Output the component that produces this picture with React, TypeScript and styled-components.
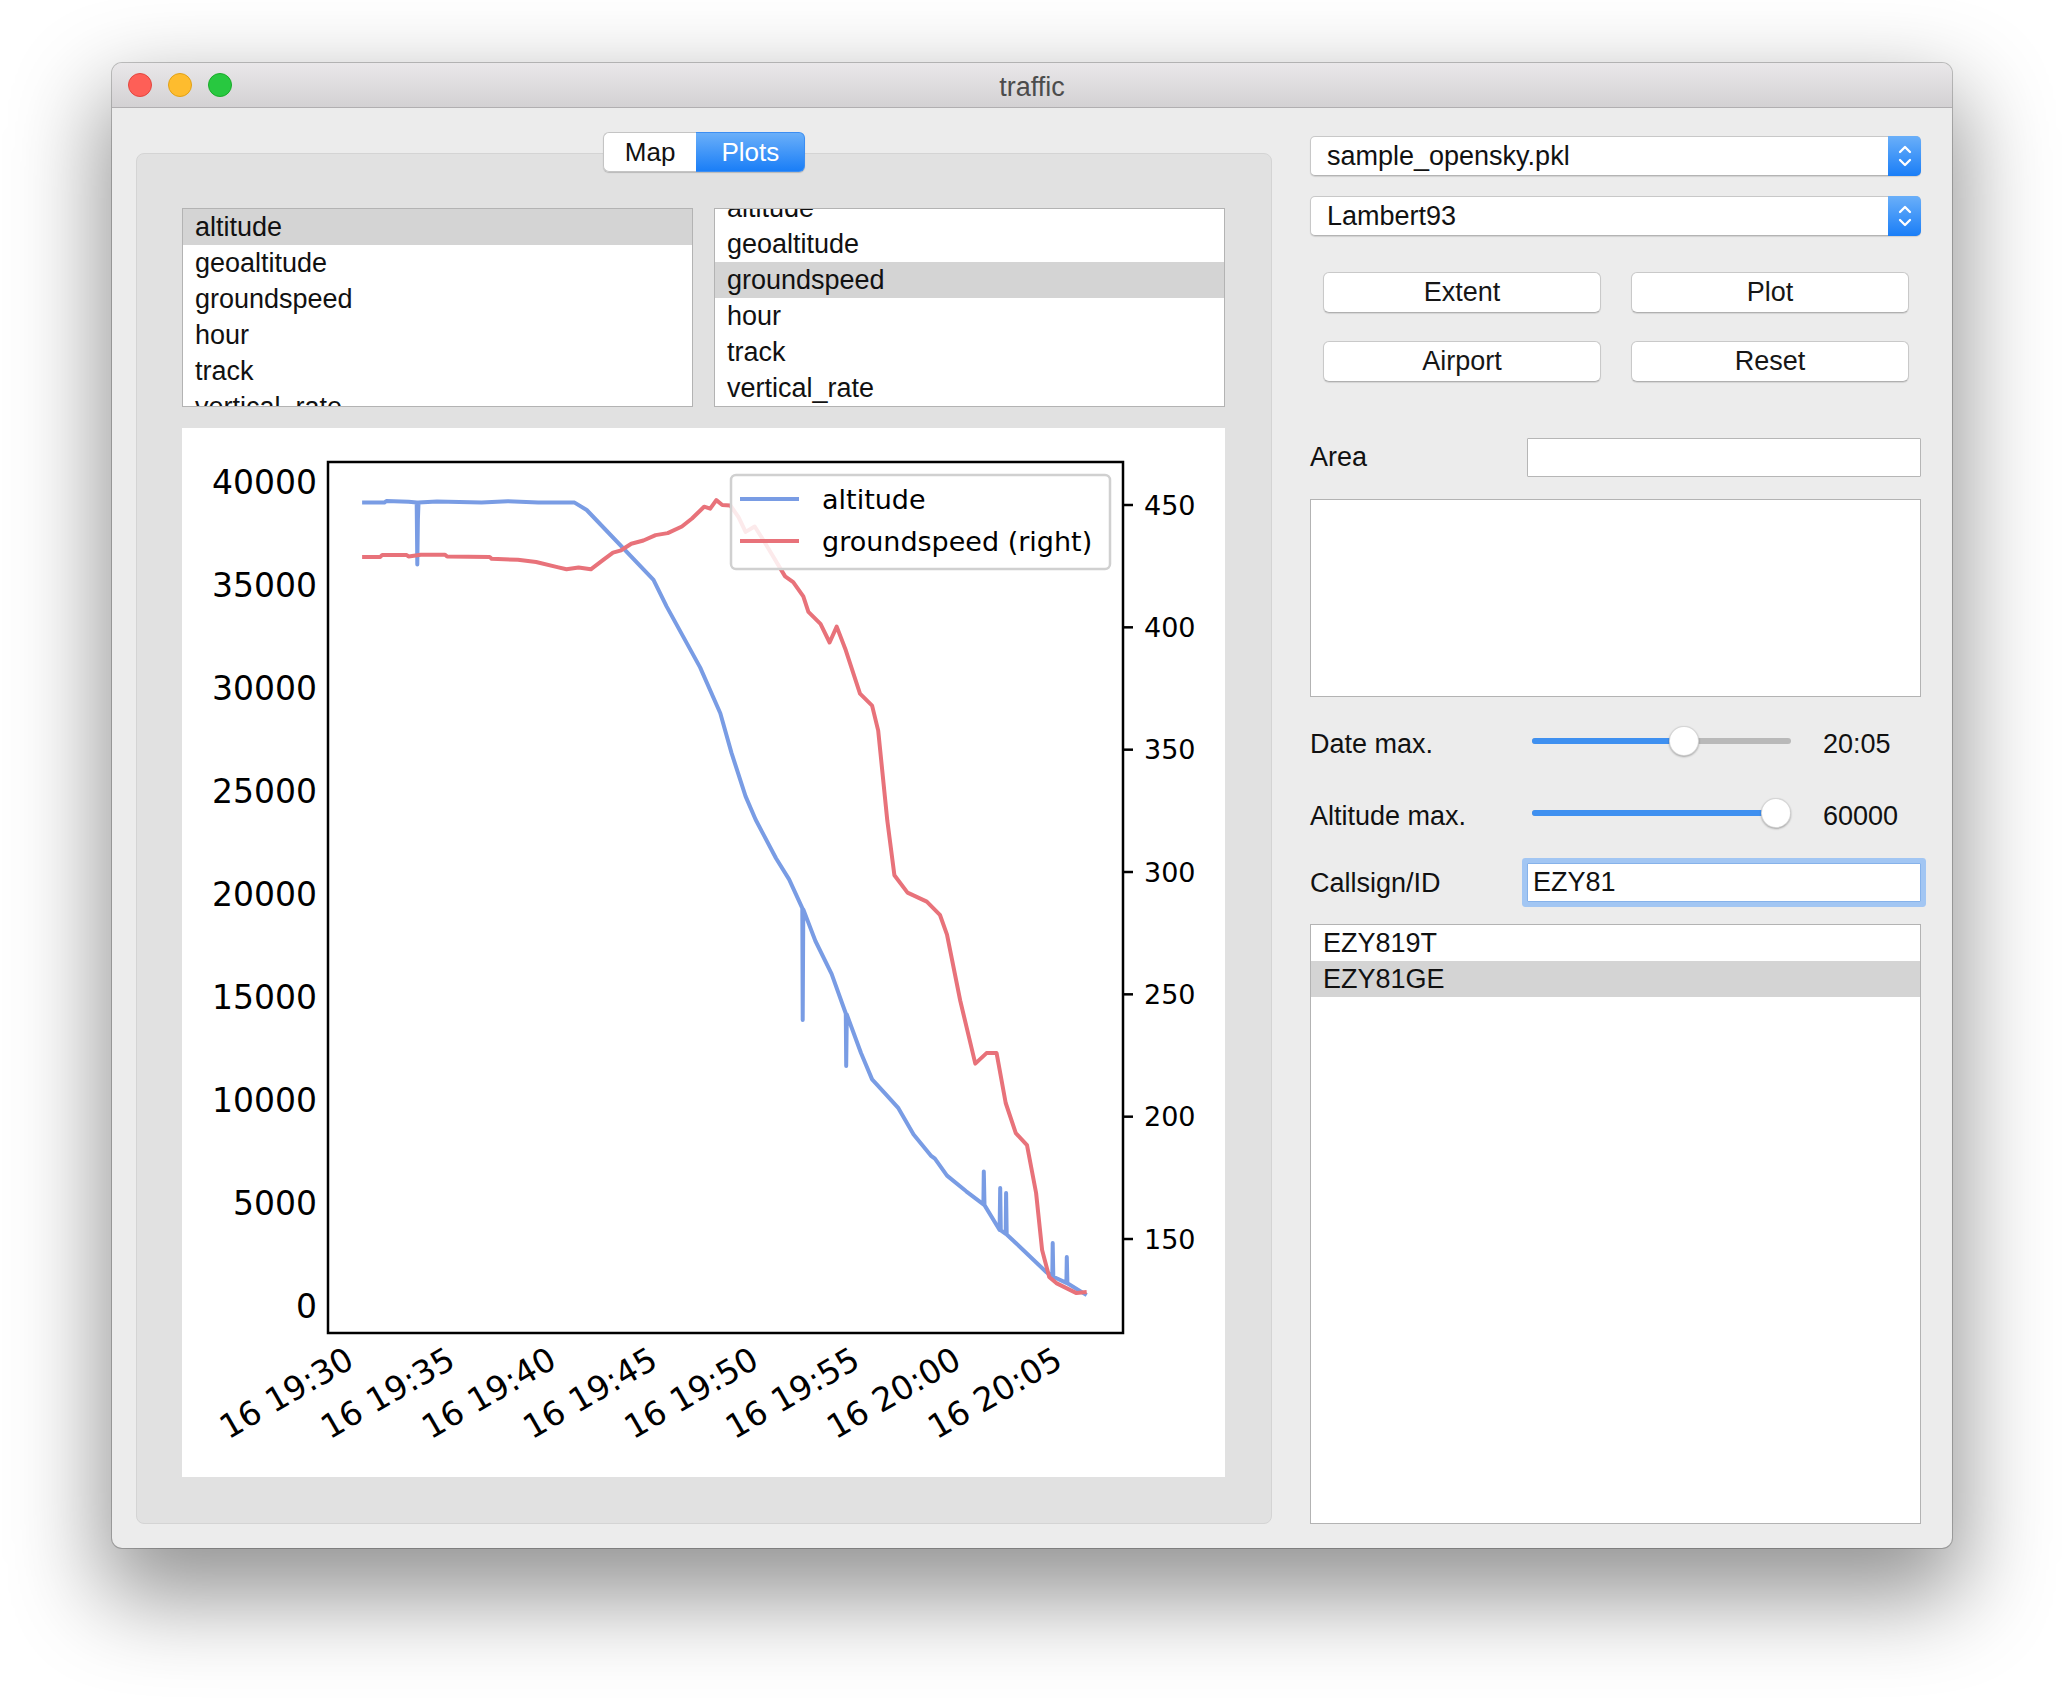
import React from 'react';
import styled, { createGlobalStyle } from 'styled-components';

const GlobalStyle = createGlobalStyle`
  html, body {
    margin: 0;
    padding: 0;
    background: #ffffff;
  }
  body {
    font-family: 'Liberation Sans', Arial, sans-serif;
    color: #1a1a1a;
  }
  * {
    box-sizing: border-box;
  }
`;

const Desktop = styled.div`
  width: 2064px;
  height: 1708px;
  display: flex;
  justify-content: center;
  padding-top: 63px;
`;

const Window = styled.div`
  width: 1840px;
  height: 1485px;
  display: flex;
  flex-direction: column;
  background: #ececec;
  border-radius: 10px;
  overflow: hidden;
  box-shadow: 0 0 0 1px rgba(0, 0, 0, 0.22), 0 40px 90px 10px rgba(0, 0, 0, 0.42);
`;

const TitleBar = styled.div`
  height: 45px;
  flex: none;
  display: grid;
  grid-template-columns: 1fr auto 1fr;
  align-items: center;
  background: linear-gradient(#e9e7e9, #d3d1d3);
  border-bottom: 1px solid #b1afb1;
`;

const Lights = styled.div`
  display: flex;
  gap: 16px;
  padding-left: 16px;
`;

const Light = styled.span<{ $fill: string; $edge: string }>`
  width: 24px;
  height: 24px;
  border-radius: 50%;
  background: ${(p) => p.$fill};
  border: 1px solid ${(p) => p.$edge};
`;

const Title = styled.div`
  padding-top: 4px;
  font-size: 27px;
  color: #4c4c4c;
`;

const Body = styled.div`
  flex: 1;
  display: flex;
  gap: 38px;
  padding: 24px 31px 24px 24px;
  min-height: 0;
`;

const TabWidget = styled.div`
  width: 1136px;
  display: flex;
  flex-direction: column;
`;

const TabBar = styled.div`
  align-self: center;
  display: flex;
  height: 40px;
  position: relative;
  z-index: 1;
  margin-bottom: -19px;
  border-radius: 6px;
  box-shadow: 0 1px 1px rgba(0, 0, 0, 0.18);
`;

const Tab = styled.div<{ $active?: boolean }>`
  display: flex;
  align-items: center;
  padding: 0 ${(p) => (p.$active ? '25px' : '21px')};
  font-size: 26px;
  color: ${(p) => (p.$active ? '#ffffff' : '#111111')};
  background: ${(p) => (p.$active ? 'linear-gradient(#6aaff9, #1a7ef7)' : '#ffffff')};
  border: 1px solid ${(p) => (p.$active ? '#3c8ef2' : '#c4c4c4')};
  border-radius: ${(p) => (p.$active ? '0 6px 6px 0' : '6px 0 0 6px')};
  ${(p) => (p.$active ? 'border-left: none;' : 'border-right: none;')}
`;

const TabPanel = styled.div`
  flex: 1;
  display: flex;
  flex-direction: column;
  gap: 21px;
  padding: 54px 46px 46px 45px;
  background: #e1e1e1;
  border: 1px solid #d4d4d4;
  border-radius: 8px;
`;

const ListsRow = styled.div`
  display: grid;
  grid-template-columns: 1fr 1fr;
  gap: 21px;
  height: 199px;
`;

const ListBox = styled.div`
  background: #ffffff;
  border: 1px solid #b3b3b3;
  overflow: hidden;
  min-height: 0;
`;

const ListInner = styled.div<{ $offset?: number }>`
  margin-top: ${(p) => -(p.$offset || 0)}px;
`;

const ListRow = styled.div<{ $selected?: boolean }>`
  height: 36px;
  display: flex;
  align-items: center;
  padding-left: 12px;
  font-size: 27px;
  color: #111111;
  background: ${(p) => (p.$selected ? '#d4d4d4' : 'transparent')};
`;

const PlotCanvas = styled.div`
  height: 1049px;
  background: #ffffff;
`;

const Side = styled.div`
  flex: 1;
  display: flex;
  flex-direction: column;
  padding-top: 4px;
  min-width: 0;
`;

const Combo = styled.div<{ $gap?: number }>`
  height: 40px;
  margin-top: ${(p) => p.$gap || 0}px;
  display: flex;
  align-items: stretch;
  background: #ffffff;
  border: 1px solid #c8c8c8;
  border-bottom-color: #b4b4b4;
  border-radius: 5px;
  box-shadow: 0 1px 1px rgba(0, 0, 0, 0.12);
`;

const ComboText = styled.div`
  flex: 1;
  display: flex;
  align-items: center;
  padding-left: 16px;
  font-size: 27px;
  color: #111111;
`;

const ComboArrow = styled.div`
  width: 33px;
  display: flex;
  align-items: center;
  justify-content: center;
  margin: -1px -1px -1px 0;
  background: linear-gradient(#6aaff9, #1a7ef7);
  border-radius: 0 5px 5px 0;
`;

const ButtonGrid = styled.div`
  display: grid;
  grid-template-columns: 1fr 1fr;
  column-gap: 30px;
  row-gap: 28px;
  padding: 0 12px 0 13px;
  margin-top: 36px;
`;

const PushButton = styled.div`
  height: 41px;
  display: flex;
  align-items: center;
  justify-content: center;
  font-size: 27px;
  color: #161616;
  background: #ffffff;
  border: 1px solid #c9c9c9;
  border-bottom-color: #b0b0b0;
  border-radius: 6px;
  box-shadow: 0 1px 1px rgba(0, 0, 0, 0.1);
`;

const FormRow = styled.div<{ $gap: number }>`
  display: grid;
  grid-template-columns: 217px 1fr;
  align-items: center;
  margin-top: ${(p) => p.$gap}px;
`;

const FieldLabel = styled.div<{ $drop?: number }>`
  padding-top: ${(p) => p.$drop || 0}px;
  font-size: 27px;
  color: #111111;
`;

const LineEdit = styled.div<{ $focused?: boolean }>`
  height: 39px;
  display: flex;
  align-items: center;
  padding-left: 5px;
  font-size: 27px;
  color: #111111;
  background: #ffffff;
  border: 1px solid ${(p) => (p.$focused ? '#86b2ea' : '#b6b6b6')};
  border-radius: 1px;
  box-shadow: ${(p) => (p.$focused ? '0 0 0 5px #a2c6f3' : 'none')};
`;

const TextArea = styled.div`
  height: 198px;
  margin-top: 22px;
  background: #ffffff;
  border: 1px solid #b3b3b3;
`;

const SliderRow = styled.div<{ $gap: number }>`
  height: 40px;
  display: grid;
  grid-template-columns: 222px 259px 1fr;
  align-items: center;
  margin-top: ${(p) => p.$gap}px;
`;

const SliderValue = styled.div`
  padding: 6px 0 0 32px;
  font-size: 27px;
  color: #111111;
`;

const SliderTrack = styled.div`
  position: relative;
  height: 6px;
  border-radius: 3px;
  background: #b9b9b9;
`;

const SliderFill = styled.div`
  height: 100%;
  border-radius: 3px;
  background: #3f90f0;
`;

const SliderThumb = styled.div`
  position: absolute;
  top: 50%;
  width: 30px;
  height: 30px;
  margin: -15px 0 0 -15px;
  border-radius: 50%;
  background: #ffffff;
  border: 1px solid rgba(0, 0, 0, 0.16);
  box-shadow: 0 1px 2px rgba(0, 0, 0, 0.3);
`;

const ResultList = styled(ListBox)`
  flex: 1;
  margin-top: 22px;
`;

const Chevrons = () => (
  <svg width="14" height="26" viewBox="0 0 14 26">
    <polyline points="2,9 7,4 12,9" fill="none" stroke="#fff" strokeWidth="2.3" strokeLinecap="round" strokeLinejoin="round" />
    <polyline points="2,17 7,22 12,17" fill="none" stroke="#fff" strokeWidth="2.3" strokeLinecap="round" strokeLinejoin="round" />
  </svg>
);

const Slider = ({ position }: { position: number }) => {
  const px = 15 + position * (259 - 30);
  return (
    <SliderTrack>
      <SliderFill style={{ width: px }} />
      <SliderThumb style={{ left: px }} />
    </SliderTrack>
  );
};

// chart geometry, in canvas pixels
const AXES = { left: 146, right: 941, top: 34, bottom: 905 };
const xAt = (t: number) => 174 + t * 20.24; // minutes after 19:30
const yAlt = (a: number) => 54 + (40000 - a) * 0.0206;
const ySpd = (v: number) => 77 + (450 - v) * 2.4467;

const altitude: [number, number][] = [
  [0.3, 39000], [1.4, 39000], [1.5, 39080], [2.6, 39040], [3.0, 39000], [3.03, 36000], [3.06, 38200],
  [3.09, 39000], [4.0, 39060], [6.2, 39000], [7.5, 39070], [9.0, 39000], [10.8, 39000], [11.4, 38640],
  [14.7, 35250], [15.35, 33950], [17.0, 31000], [18.0, 28770], [18.55, 26850], [19.25, 24740],
  [19.75, 23600], [20.75, 21740], [21.4, 20710], [22.05, 19310], [22.07, 13880], [22.1, 19250],
  [22.7, 17720], [23.5, 16120], [24.2, 14200], [24.22, 11650], [24.25, 14150], [24.95, 12280],
  [25.5, 11000], [26.1, 10360], [26.8, 9600], [27.55, 8320], [28.4, 7300], [28.6, 7150], [29.2, 6330],
  [30.15, 5570], [31.0, 4930], [31.02, 6530], [31.05, 4900], [31.8, 3690], [31.83, 5730], [31.86, 3670],
  [32.1, 3500], [32.12, 5480], [32.15, 3470], [32.6, 3060], [34.1, 1650], [34.4, 1450], [34.42, 3060],
  [34.45, 1420], [35.1, 1120], [35.12, 2380], [35.15, 1100], [36.1, 530],
];

const groundspeed: [number, number][] = [
  [0.3, 428.8], [1.2, 428.8], [1.3, 429.6], [2.5, 429.6], [2.6, 428.9], [3.2, 429.7], [4.4, 429.7],
  [4.5, 429], [6.6, 428.8], [6.7, 428], [8.0, 427.6], [8.9, 426.7], [10.0, 424.5], [10.4, 423.7],
  [11.0, 424.5], [11.6, 423.7], [12.2, 427.5], [12.7, 430.5], [13.1, 431.5], [13.6, 434.2], [14.2, 435.5],
  [14.8, 437.7], [15.4, 438.5], [16.1, 441.2], [16.6, 444.5], [17.2, 449.3], [17.5, 448.5], [17.8, 452],
  [18.1, 450], [18.5, 449.8], [18.9, 445], [19.25, 439], [19.7, 441.2], [20.1, 436], [20.5, 430.5],
  [21.2, 420.8], [21.6, 418.5], [22.1, 412.7], [22.35, 406.3], [22.95, 401.4], [23.4, 393.8],
  [23.75, 400.3], [24.2, 390.6], [24.9, 372.9], [25.5, 368], [25.8, 357.8], [26.25, 321], [26.6, 298.7],
  [27.25, 291.6], [28.2, 287.9], [28.85, 282.5], [29.2, 274.4], [29.85, 247.5], [30.6, 221.7],
  [31.15, 226], [31.65, 226], [32.1, 205.6], [32.6, 193.3], [33.15, 188.4], [33.6, 168.8],
  [33.9, 145.5], [34.25, 134.5], [34.6, 132], [35.6, 127.9], [36.1, 128.3],
];

const toPoints = (data: [number, number][], y: (v: number) => number) =>
  data.map(([t, v]) => `${xAt(t).toFixed(1)},${y(v).toFixed(1)}`).join(' ');

const BLUE = '#799ce4';
const RED = '#e8727a';
const leftTicks = [0, 5000, 10000, 15000, 20000, 25000, 30000, 35000, 40000];
const rightTicks = [150, 200, 250, 300, 350, 400, 450];
const timeTicks = ['19:30', '19:35', '19:40', '19:45', '19:50', '19:55', '20:00', '20:05'];

const FlightChart = () => (
  <svg width="1043" height="1049" viewBox="0 0 1043 1049" fontFamily="'DejaVu Sans', sans-serif">
    <polyline points={toPoints(altitude, yAlt)} fill="none" stroke={BLUE} strokeWidth="4" strokeLinejoin="round" />
    <polyline points={toPoints(groundspeed, ySpd)} fill="none" stroke={RED} strokeWidth="4" strokeLinejoin="round" />
    <rect
      x={AXES.left}
      y={AXES.top}
      width={AXES.right - AXES.left}
      height={AXES.bottom - AXES.top}
      fill="none"
      stroke="#000"
      strokeWidth="2.5"
    />
    {leftTicks.map((v) => (
      <text key={v} x="135" y={yAlt(v)} fontSize="33" textAnchor="end" dominantBaseline="central" fill="#000">
        {v}
      </text>
    ))}
    {rightTicks.map((v) => (
      <g key={v}>
        <line x1={AXES.right} x2={AXES.right + 10} y1={ySpd(v)} y2={ySpd(v)} stroke="#000" strokeWidth="2.5" />
        <text x="962" y={ySpd(v)} fontSize="27" dominantBaseline="central" fill="#000">
          {v}
        </text>
      </g>
    ))}
    {timeTicks.map((label, i) => (
      <text
        key={label}
        transform={`translate(${xAt(i * 5)}, 938) rotate(-30)`}
        fontSize="33"
        textAnchor="end"
        fill="#000"
      >
        16 {label}
      </text>
    ))}
    <rect x="549" y="47" width="379" height="94" rx="5" fill="#fff" fillOpacity="0.85" stroke="#d0d0d0" strokeWidth="2.5" />
    <line x1="558" x2="617" y1="71" y2="71" stroke={BLUE} strokeWidth="4" />
    <line x1="558" x2="617" y1="113" y2="113" stroke={RED} strokeWidth="4" />
    <text x="640" y="71" fontSize="27" dominantBaseline="central" fill="#000">
      altitude
    </text>
    <text x="640" y="113" fontSize="27" dominantBaseline="central" fill="#000">
      groundspeed (right)
    </text>
  </svg>
);

const columns = ['altitude', 'geoaltitude', 'groundspeed', 'hour', 'track', 'vertical_rate'];

export default function App() {
  return (
    <>
      <GlobalStyle />
      <Desktop>
        <Window>
          <TitleBar>
            <Lights>
              <Light $fill="#fe5f57" $edge="#e2463f" />
              <Light $fill="#febc2e" $edge="#e1a116" />
              <Light $fill="#28c840" $edge="#1aab29" />
            </Lights>
            <Title>traffic</Title>
            <div />
          </TitleBar>
          <Body>
            <TabWidget>
              <TabBar>
                <Tab>Map</Tab>
                <Tab $active>Plots</Tab>
              </TabBar>
              <TabPanel>
                <ListsRow>
                  <ListBox>
                    <ListInner>
                      {columns.map((c) => (
                        <ListRow key={c} $selected={c === 'altitude'}>
                          {c}
                        </ListRow>
                      ))}
                    </ListInner>
                  </ListBox>
                  <ListBox>
                    <ListInner $offset={19}>
                      {columns.map((c) => (
                        <ListRow key={c} $selected={c === 'groundspeed'}>
                          {c}
                        </ListRow>
                      ))}
                    </ListInner>
                  </ListBox>
                </ListsRow>
                <PlotCanvas>
                  <FlightChart />
                </PlotCanvas>
              </TabPanel>
            </TabWidget>

            <Side>
              <Combo>
                <ComboText>sample_opensky.pkl</ComboText>
                <ComboArrow>
                  <Chevrons />
                </ComboArrow>
              </Combo>
              <Combo $gap={20}>
                <ComboText>Lambert93</ComboText>
                <ComboArrow>
                  <Chevrons />
                </ComboArrow>
              </Combo>

              <ButtonGrid>
                <PushButton>Extent</PushButton>
                <PushButton>Plot</PushButton>
                <PushButton>Airport</PushButton>
                <PushButton>Reset</PushButton>
              </ButtonGrid>

              <FormRow $gap={56}>
                <FieldLabel>Area</FieldLabel>
                <LineEdit />
              </FormRow>
              <TextArea />

              <SliderRow $gap={24}>
                <FieldLabel $drop={6}>Date max.</FieldLabel>
                <Slider position={0.598} />
                <SliderValue>20:05</SliderValue>
              </SliderRow>
              <SliderRow $gap={32}>
                <FieldLabel $drop={6}>Altitude max.</FieldLabel>
                <Slider position={1} />
                <SliderValue>60000</SliderValue>
              </SliderRow>

              <FormRow $gap={30}>
                <FieldLabel $drop={2}>Callsign/ID</FieldLabel>
                <LineEdit $focused>EZY81</LineEdit>
              </FormRow>

              <ResultList>
                <ListRow>EZY819T</ListRow>
                <ListRow $selected>EZY81GE</ListRow>
              </ResultList>
            </Side>
          </Body>
        </Window>
      </Desktop>
    </>
  );
}
